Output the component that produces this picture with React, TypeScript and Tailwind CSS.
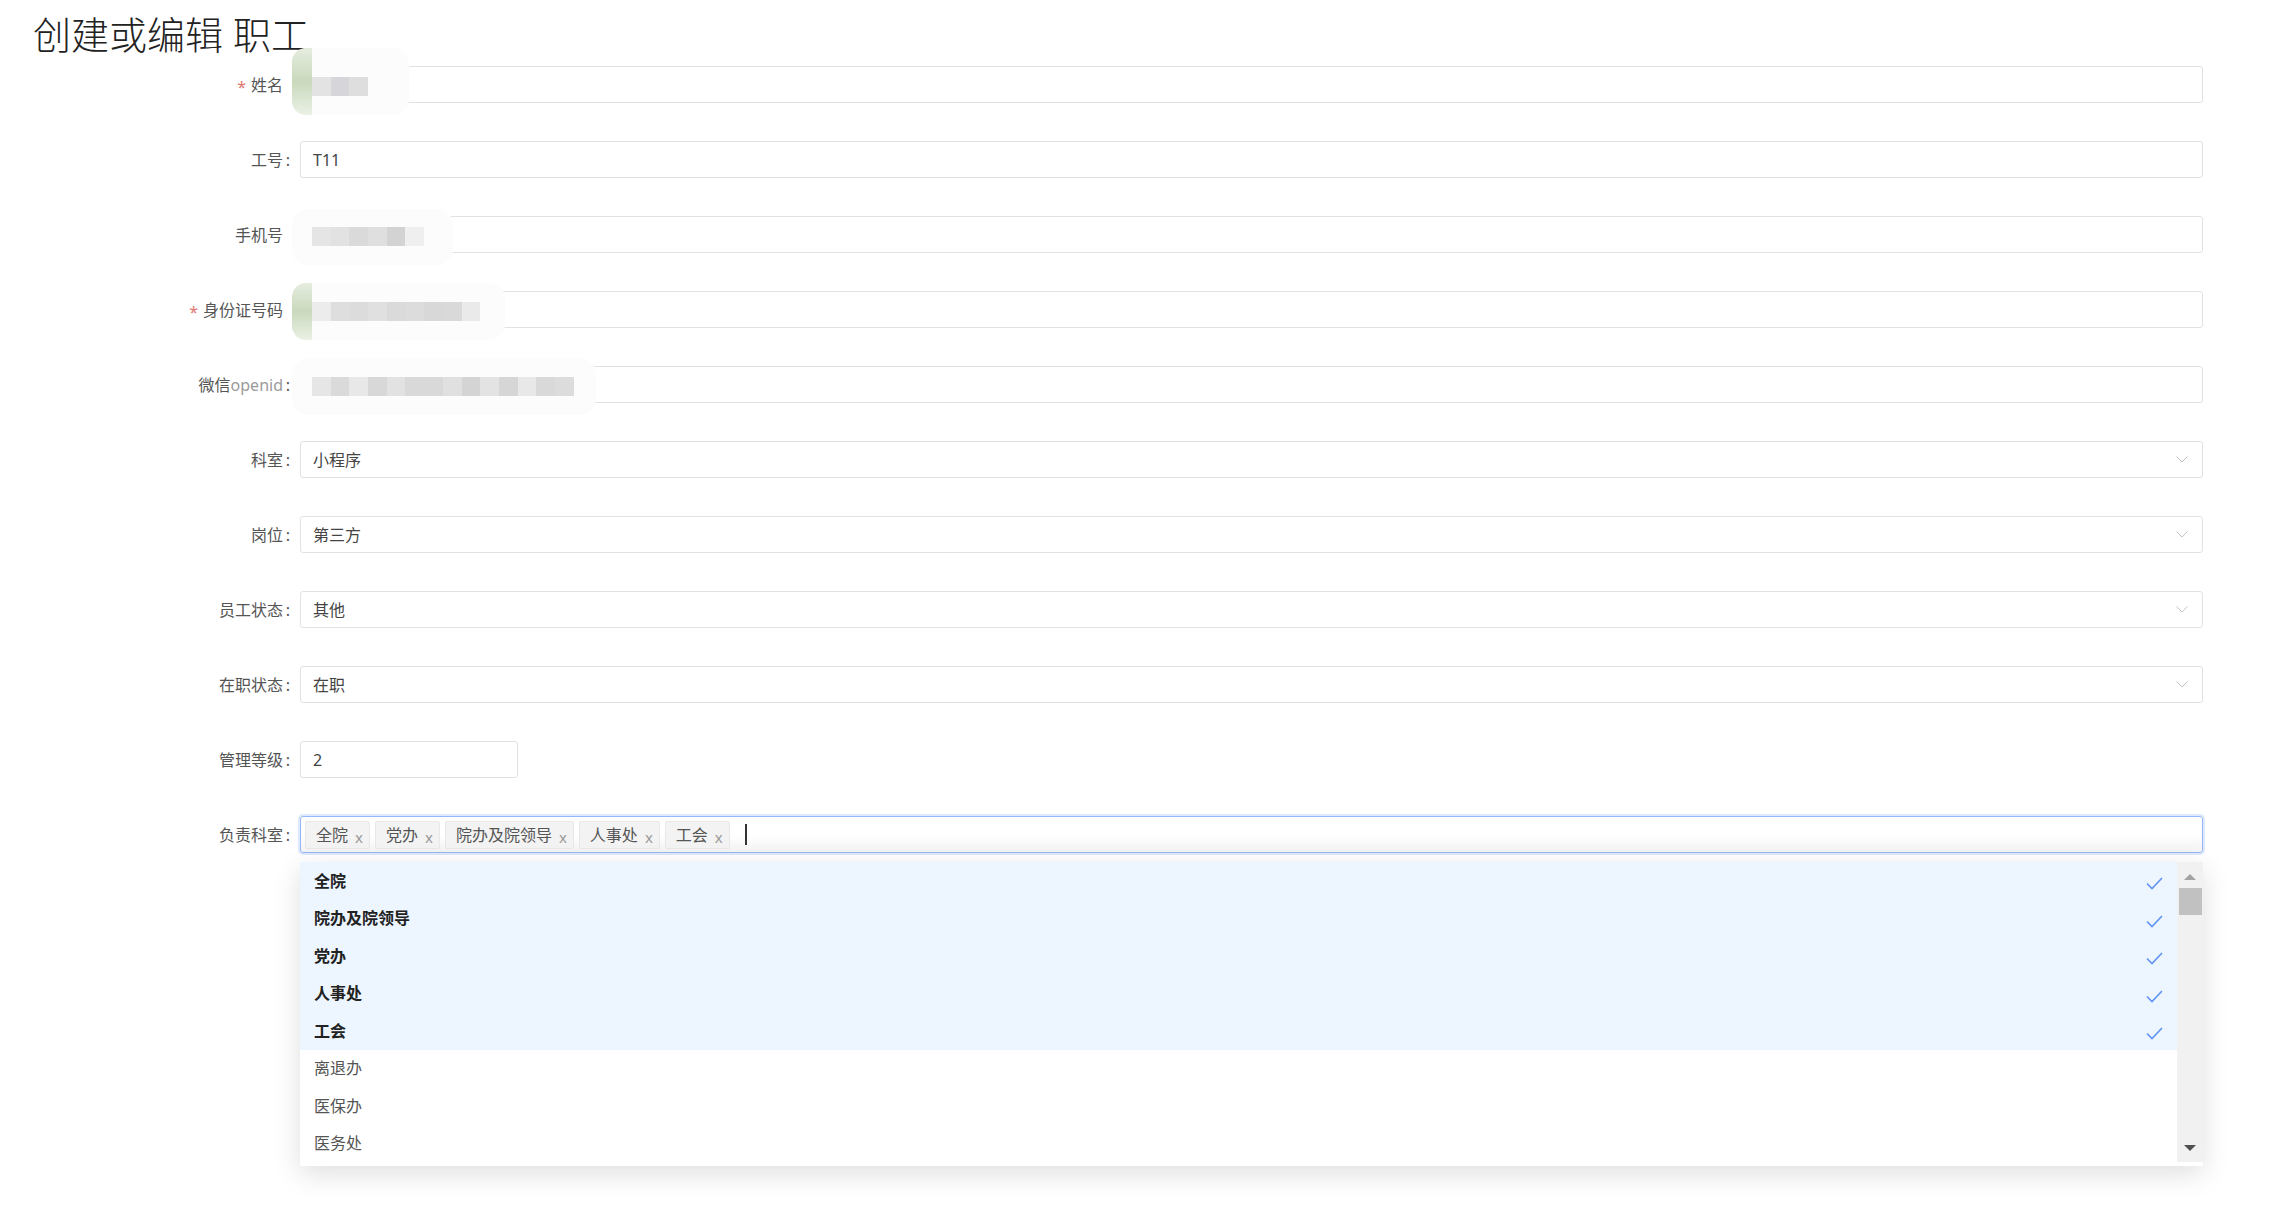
import React from "react";

type Patch = {
  top: number;
  h: number;
  w: number;
  green: boolean;
  mTop: number;
  mH: number;
  blocks: string[];
};

const Chevron = () => (
  <svg width="12" height="7" viewBox="0 0 12 7" className="shrink-0">
    <path d="M0.5 0.5 L6 6 L11.5 0.5" fill="none" stroke="#c2c2c2" strokeWidth="1" />
  </svg>
);

const Check = () => (
  <svg width="17" height="13" viewBox="0 0 17 13" className="shrink-0 translate-y-[3px]">
    <path d="M1 6.5 L6 11.5 L16 1" fill="none" stroke="#5f93f2" strokeWidth="1.6" />
  </svg>
);

function PrivacyPatch({ p }: { p: Patch }) {
  return (
    <div
      className="absolute left-[292px] z-10 rounded-[16px] bg-[#fcfcfc]"
      style={{ top: p.top, height: p.h, width: p.w }}
    >
      {p.green && (
        <div className="absolute left-0 top-0 h-full w-[20px] rounded-l-[14px] bg-linear-to-b from-[#e6ede0] via-[#c9d9bc] to-[#ebf1e6]" />
      )}
      <div className="absolute left-[20px] flex" style={{ top: p.mTop - p.top, height: p.mH }}>
        {p.blocks.map((c, i) => (
          <div key={i} className="h-full w-[18.7px]" style={{ background: c }} />
        ))}
      </div>
    </div>
  );
}

function Label({ text, req, colon, extra }: { text: string; req?: boolean; colon?: boolean; extra?: React.ReactNode }) {
  return (
    <div className="flex w-[300px] shrink-0 items-center justify-end pr-[10px] text-[16px] text-[#555]">
      {req && <span className="mr-[5px] translate-y-[2px] text-[#e0766f]">*</span>}
      <span>{text}</span>
      {extra}
      <span className="w-[7px] text-right">{colon ? ":" : ""}</span>
    </div>
  );
}

function Row({
  label,
  req,
  colon = true,
  value,
  select,
  narrow,
  patch,
  extra,
}: {
  label: string;
  req?: boolean;
  colon?: boolean;
  value?: string;
  select?: boolean;
  narrow?: boolean;
  patch?: Patch;
  extra?: React.ReactNode;
}) {
  return (
    <div className="relative flex h-[37px] items-stretch">
      <Label text={label} req={req} colon={colon} extra={extra} />
      <div
        className={`flex h-full items-center justify-between rounded-[3px] border border-[#e2e2e2] bg-white pl-[12px] pr-[14px] text-[16px] text-[#444] ${
          narrow ? "w-[218px]" : "flex-1"
        }`}
      >
        <span>{value}</span>
        {select && <Chevron />}
      </div>
      {patch && <PrivacyPatch p={patch} />}
    </div>
  );
}

const tags = ["全院", "党办", "院办及院领导", "人事处", "工会"];
const options: { t: string; sel: boolean }[] = [
  { t: "全院", sel: true },
  { t: "院办及院领导", sel: true },
  { t: "党办", sel: true },
  { t: "人事处", sel: true },
  { t: "工会", sel: true },
  { t: "离退办", sel: false },
  { t: "医保办", sel: false },
  { t: "医务处", sel: false },
];

export default function App() {
  return (
    <div className="relative min-h-screen w-full bg-white font-['Noto_Sans','Noto_Sans_CJK_SC',sans-serif]">
      <h1 className="h-[56px] pl-[33px] pt-[12px] text-[38px] font-light leading-[44px] text-[#222]">
        创建或编辑 职工
      </h1>
      <div className="mt-[10px] flex flex-col gap-[38px] pr-[82px]">
        <Row
          label="姓名"
          req
          colon={false}
          patch={{
            top: -18,
            h: 67,
            w: 117,
            green: true,
            mTop: 11,
            mH: 19,
            blocks: ["#e3e3e3", "#d6d6da", "#dedede"],
          }}
        />
        <Row label="工号" value="T11" />
        <Row
          label="手机号"
          colon={false}
          patch={{
            top: -7,
            h: 56,
            w: 161,
            green: false,
            mTop: 11,
            mH: 19,
            blocks: ["#e5e5e5", "#e2e2e2", "#dadada", "#dfdfdf", "#d3d3d3", "#efefef"],
          }}
        />
        <Row
          label="身份证号码"
          req
          colon={false}
          patch={{
            top: -8,
            h: 57,
            w: 213,
            green: true,
            mTop: 11,
            mH: 19,
            blocks: ["#ececec", "#dedede", "#dcdcdc", "#e0e0e0", "#dadada", "#dcdcdc", "#d8d8d8", "#d9d9d9", "#eaeaea"],
          }}
        />
        <Row
          label="微信"
          extra={<span className="text-[#9a9a9a]">openid</span>}
          patch={{
            top: -8,
            h: 57,
            w: 304,
            green: false,
            mTop: 11,
            mH: 19,
            blocks: [
              "#e6e6e6",
              "#dadada",
              "#e8e8e8",
              "#d8d8d8",
              "#e2e2e2",
              "#d9d9d9",
              "#d9d9d9",
              "#e0e0e0",
              "#d4d4d4",
              "#e3e3e3",
              "#d6d6d6",
              "#e8e8e8",
              "#d9d9d9",
              "#dcdcdc",
            ],
          }}
        />
        <Row label="科室" value="小程序" select />
        <Row label="岗位" value="第三方" select />
        <Row label="员工状态" value="其他" select />
        <Row label="在职状态" value="在职" select />
        <Row label="管理等级" value="2" narrow />

        <div className="relative flex h-[37px] items-stretch">
          <Label text="负责科室" colon />
          <div className="flex h-full flex-1 items-center gap-[5px] rounded-[3px] border border-[#94b8f7] bg-linear-to-b from-white via-white to-[#f3f3f3] pl-[4px] shadow-[0_0_0_2px_#dfe9fb] text-[16px]">
            {tags.map((t) => (
              <div
                key={t}
                className="flex h-[28px] items-center rounded-[2px] border border-[#e8e8e8] bg-[#f3f3f3] pl-[10px] pr-[6px] text-[#555]"
              >
                <span>{t}</span>
                <span className="ml-[7px] translate-y-[3px] text-[15px] leading-none text-[#999]">x</span>
              </div>
            ))}
            <div className="ml-[10px] h-[21px] w-[2px] bg-[#333]" />
          </div>

          <div className="absolute left-[300px] right-0 top-[46px] z-20 flex bg-white pb-[4px] shadow-[0_8px_26px_rgba(0,0,0,0.13)]">
            <div className="flex flex-1 flex-col">
              {options.map((o) => (
                <div
                  key={o.t}
                  className={`flex h-[37.5px] items-center justify-between pl-[14px] pr-[14px] text-[16px] ${
                    o.sel ? "bg-[#edf6ff] font-bold text-[#222]" : "text-[#555]"
                  }`}
                >
                  <span>{o.t}</span>
                  {o.sel && <Check />}
                </div>
              ))}
            </div>
            <div className="flex h-[300px] w-[26px] flex-col items-center bg-[#f1f1f1]">
              <div className="mt-[12px] h-0 w-0 border-x-[6px] border-b-[6px] border-x-transparent border-b-[#a3a3a3]" />
              <div className="mt-[8px] ml-[1px] h-[27px] w-[23px] bg-[#c1c1c1]" />
              <div className="flex-1" />
              <div className="mb-[11px] h-0 w-0 border-x-[6px] border-t-[6px] border-x-transparent border-t-[#505050]" />
            </div>
          </div>
        </div>
      </div>
    </div>
  );
}
